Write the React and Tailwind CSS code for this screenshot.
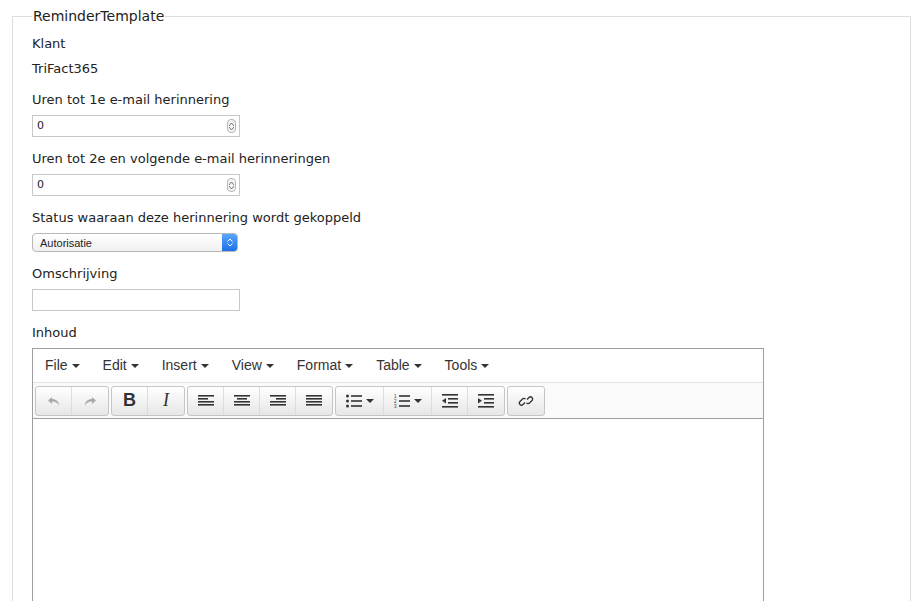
const V = { fontFamily: '"DejaVu Sans", Verdana, sans-serif' };
const H = { fontFamily: '"Liberation Sans", Arial, sans-serif' };

function Spin() {
  return (
    <div className="absolute right-[3px] top-[3px] w-[9px] h-[14px] border border-[#b5b5b5] rounded-[4px] bg-[#f4f4f4] flex flex-col items-center justify-center gap-[1px]">
      <svg width="5" height="3" viewBox="0 0 5 3"><path d="M0 3L2.5 0L5 3" fill="none" stroke="#555" strokeWidth="0.8"/></svg>
      <svg width="5" height="3" viewBox="0 0 5 3"><path d="M0 0L2.5 3L5 0" fill="none" stroke="#555" strokeWidth="0.8"/></svg>
    </div>
  );
}
function NumInput() {
  return (
    <div className="relative w-[208px] h-[22px] border border-[#c8c8c8] bg-white flex items-center pl-[4px] text-[11px]" style={V}>
      0<Spin />
    </div>
  );
}
const Caret = () => <span className="inline-block ml-[4px] align-middle border-x-[4px] border-x-transparent border-t-[4px] border-t-[#333]" />;
const lines = (rows) => (
  <svg width="16" height="14" viewBox="0 0 16 14">{rows.map(([x, w], i) => <rect key={i} x={x} y={1 + i * 3} width={w} height="1.6" fill="#333" />)}</svg>
);
function Btn({ children, w = 36 }) {
  return <div className="h-[28px] flex items-center justify-center" style={{ width: w }}>{children}</div>;
}
function Group({ children }) {
  return <div className="flex border border-[#c5c5c5] rounded-[3px] bg-gradient-to-b from-white to-[#e6e6e6] divide-x divide-[#dcdcdc]">{children}</div>;
}
export default function App() {
  return (
    <div className="w-[924px] h-[601px] bg-white overflow-hidden pl-[12px] pr-[13px] text-[#222]">
      <fieldset className="border border-[#ddd] h-[620px] mt-[6px] pl-[19px]">
        <legend className="text-[14px] px-[1px]" style={V}>ReminderTemplate</legend>
        <div className="text-[13px] leading-[18px]" style={V}>
          <div className="mt-[8px]">Klant</div>
          <div className="mt-[7px]">TriFact365</div>
          <div className="mt-[13px] mb-[6px]">Uren tot 1e e-mail herinnering</div>
          <NumInput />
          <div className="mt-[13px] mb-[6px]">Uren tot 2e en volgende e-mail herinneringen</div>
          <NumInput />
          <div className="mt-[13px] mb-[6px]">Status waaraan deze herinnering wordt gekoppeld</div>
          <div className="relative w-[206px] h-[19px] border border-[#b8b8b8] rounded-[4px] bg-gradient-to-b from-white to-[#f0f0f0] text-[11px] pl-[7px] flex items-center overflow-hidden" style={H}>
            Autorisatie
            <div className="absolute right-0 top-0 bottom-0 w-[15px] bg-gradient-to-b from-[#5aa6ff] to-[#1c6fe8] flex flex-col items-center justify-center gap-[1px]">
              <svg width="6" height="4" viewBox="0 0 6 4"><path d="M0.5 3.5L3 1L5.5 3.5" fill="none" stroke="#fff" strokeWidth="1"/></svg>
              <svg width="6" height="4" viewBox="0 0 6 4"><path d="M0.5 0.5L3 3L5.5 0.5" fill="none" stroke="#fff" strokeWidth="1"/></svg>
            </div>
          </div>
          <div className="mt-[13px] mb-[6px]">Omschrijving</div>
          <div className="w-[208px] h-[22px] border border-[#c8c8c8]" />
          <div className="mt-[13px] mb-[6px]">Inhoud</div>
        </div>
        <div className="w-[732px] border border-[#9e9e9e] h-[260px]" style={H}>
          <div className="h-[34px] flex items-center pl-[12px] gap-[23px] text-[14px] text-[#333] border-b border-[#e2e2e2]">
            {["File", "Edit", "Insert", "View", "Format", "Table", "Tools"].map(m => <span key={m}>{m}<Caret /></span>)}
          </div>
          <div className="h-[36px] flex items-center pl-[2px] gap-[2px] bg-[#fafafa] border-b border-[#9e9e9e]">
            <Group>
              <Btn><svg width="14" height="14" viewBox="0 0 14 14"><path d="M5 3L1 6.5L5 10V7.5C9 7.5 11 9 12 12C12 7 9 5 5 5Z" fill="#aaa"/></svg></Btn>
              <Btn><svg width="14" height="14" viewBox="0 0 14 14"><path d="M9 3L13 6.5L9 10V7.5C5 7.5 3 9 2 12C2 7 5 5 9 5Z" fill="#aaa"/></svg></Btn>
            </Group>
            <Group>
              <Btn><span className="font-bold text-[18px] text-[#333]">B</span></Btn>
              <Btn><span className="italic text-[18px] text-[#333]" style={{ fontFamily: '"Liberation Serif", serif' }}>I</span></Btn>
            </Group>
            <Group>
              <Btn>{lines([[0, 16], [0, 10], [0, 16], [0, 16]])}</Btn>
              <Btn>{lines([[0, 16], [3, 10], [0, 16], [0, 16]])}</Btn>
              <Btn>{lines([[0, 16], [6, 10], [0, 16], [0, 16]])}</Btn>
              <Btn>{lines([[0, 16], [0, 16], [0, 16], [0, 16]])}</Btn>
            </Group>
            <Group>
              <Btn w={48}><svg width="16" height="14" viewBox="0 0 16 14"><circle cx="1.5" cy="2" r="1.5" fill="#333"/><circle cx="1.5" cy="7" r="1.5" fill="#333"/><circle cx="1.5" cy="12" r="1.5" fill="#333"/><rect x="5" y="1.2" width="11" height="1.6" fill="#333"/><rect x="5" y="6.2" width="11" height="1.6" fill="#333"/><rect x="5" y="11.2" width="11" height="1.6" fill="#333"/></svg><Caret /></Btn>
              <Btn w={48}><svg width="16" height="14" viewBox="0 0 16 14"><text x="0" y="4" fontSize="4.5" fill="#333">1</text><text x="0" y="9" fontSize="4.5" fill="#333">2</text><text x="0" y="14" fontSize="4.5" fill="#333">3</text><rect x="5" y="1.2" width="11" height="1.6" fill="#333"/><rect x="5" y="6.2" width="11" height="1.6" fill="#333"/><rect x="5" y="11.2" width="11" height="1.6" fill="#333"/></svg><Caret /></Btn>
              <Btn><svg width="16" height="14" viewBox="0 0 16 14"><rect x="0" y="0" width="16" height="1.6" fill="#333"/><rect x="6" y="4" width="10" height="1.6" fill="#333"/><rect x="6" y="8" width="10" height="1.6" fill="#333"/><rect x="0" y="12" width="16" height="1.6" fill="#333"/><path d="M4 4L0 6.8L4 9.6Z" fill="#333"/></svg></Btn>
              <Btn><svg width="16" height="14" viewBox="0 0 16 14"><rect x="0" y="0" width="16" height="1.6" fill="#333"/><rect x="6" y="4" width="10" height="1.6" fill="#333"/><rect x="6" y="8" width="10" height="1.6" fill="#333"/><rect x="0" y="12" width="16" height="1.6" fill="#333"/><path d="M0 4L4 6.8L0 9.6Z" fill="#333"/></svg></Btn>
            </Group>
            <Group>
              <Btn><svg width="16" height="16" viewBox="0 0 16 16" fill="none" stroke="#333" strokeWidth="1.3"><path d="M7 9.5L5 11.5A2.1 2.1 0 0 1 2 8.5L4.5 6A2.1 2.1 0 0 1 7.5 6"/><path d="M9 6.5L11 4.5A2.1 2.1 0 0 1 14 7.5L11.5 10A2.1 2.1 0 0 1 8.5 10"/></svg></Btn>
            </Group>
          </div>
        </div>
      </fieldset>
    </div>
  );
}
